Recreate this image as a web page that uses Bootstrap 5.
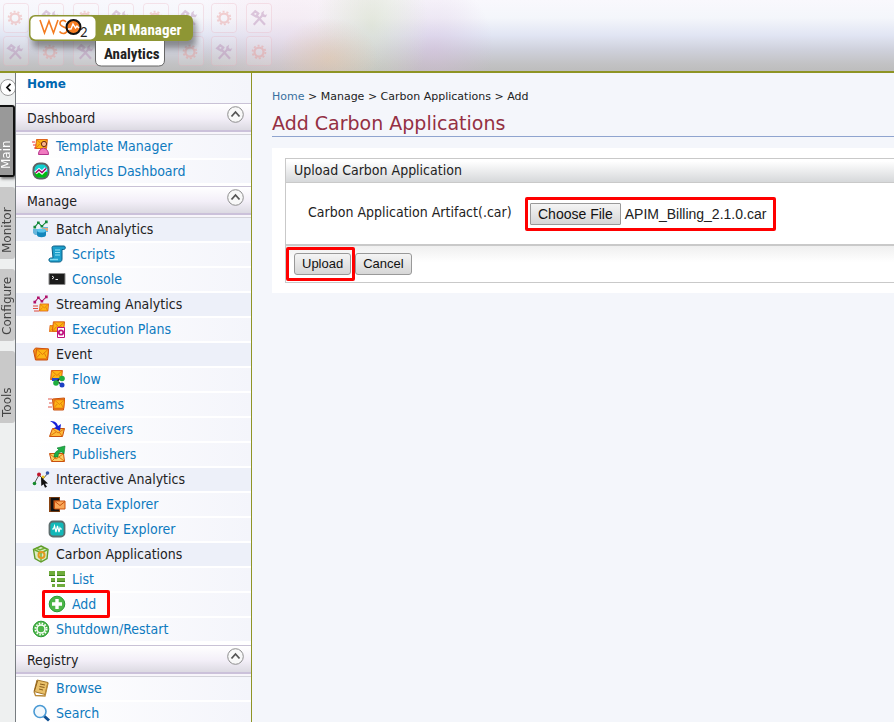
<!DOCTYPE html>
<html lang="en">
<head>
<meta charset="utf-8">
<meta name="viewport" content="width=device-width, initial-scale=1">
<title>WSO2 API Manager Analytics</title>
<link href="https://cdn.jsdelivr.net/npm/bootstrap@5.3.0/dist/css/bootstrap.min.css" rel="stylesheet">
<style>
body{font-family:"DejaVu Sans Condensed","DejaVu Sans",sans-serif;font-size:14px;line-height:16px;color:#222;background:#f4f6fb}
a{color:#0e7abf;text-decoration:none}
.top-bar{height:73px;border-bottom:2px solid #8e9424;background:
 radial-gradient(ellipse 50px 40px at 328px 58px,rgba(232,200,165,.5),transparent),
 radial-gradient(ellipse 56px 90px at 372px 26px,rgba(215,222,200,.6),transparent),
 radial-gradient(ellipse 60px 70px at 434px 50px,rgba(215,185,220,.42),transparent),
 radial-gradient(ellipse 100px 80px at 290px 36px,rgba(245,215,228,.4),transparent),
 linear-gradient(#f9f8fd 0,#f4f6fb 25%,#e1e5f3 50%,#cfd1dc 70%,#c2c2c4 90%,#bdbdbd)}
.brand-art{display:block}
.brand-name{font-family:"Roboto Condensed","Open Sans Condensed","Roboto",sans-serif;font-weight:700}
.rail{width:16px;padding-top:6px;background:#eef0f0;border-right:1px solid #777c80;overflow:hidden;font-family:"DejaVu Sans",sans-serif;font-size:12px}
.rail-toggle{width:16px;height:17px;border:1px solid #999;border-radius:9px;background:#fff;margin-bottom:9px}
.rail-tab{writing-mode:vertical-rl;transform:rotate(180deg);height:72px;width:15px;border:0;border-radius:3px 0 0 3px;background:#c9c9c9;color:#444;line-height:12px;margin-bottom:10px;text-align:left;padding:6px 0 0 2px}
.rail-tab.active{background:#999;color:#fff;border:2px solid #111;border-right:0;box-shadow:-1px -2px 3px #777}
.side{width:236px;border-right:1px solid #8e9424;background:#fff}
.side-home{height:30px;padding-left:11px;font-family:"DejaVu Sans",sans-serif;font-size:12px;font-weight:700;line-height:22px;background:linear-gradient(90deg,#fff,#f4f5fb)}
.side-home a{color:#0067b1}
.side-head{padding:0 7px 0 11px;font-size:14px;font-weight:400;line-height:28px;height:29px;border-top:1px solid #c9c2d6;border-bottom:2px solid #cbc1da;background:linear-gradient(#fff,#f3eff8 55%,#dcdae2)}
.side-rule{height:3px;border-bottom:1px solid #d3d3da;background:#f7f5fa}
.side-list{padding-bottom:1px}
.side-list.long{padding-bottom:2px}
.fold{width:17px;height:17px;margin-top:2px}
.side-row{height:25px;border-bottom:2px solid #fff;padding:0 0 1px 16px;background:linear-gradient(90deg,#fff 14px,#f4f5fb)}
.side-row.sub{padding-left:32px}
.side-row.group{background:#edf0f9}
.side-row svg{width:18px;height:18px;flex:none;margin-right:6px}
.main-col{padding:16px 0 0 20px}
.crumbs{font-family:"DejaVu Sans",sans-serif;font-size:11px}
.crumbs a{color:#386f9e}
h1{margin:6px 0 0;padding-bottom:1px;font-family:"DejaVu Sans",sans-serif;font-size:19px;line-height:24px;color:#943043;border-bottom:1px solid #8fa4cf}
.work{margin-top:11px;padding:10px 0 10px 13px}
.panel-box{border:1px solid #c9c9c9;border-right:0}
.panel-head{font-size:14px;line-height:22px;font-weight:400;height:24px;background:linear-gradient(#fff 10%,#d6d8da);border-bottom:1px solid #c9c9c9}
.panel-body{height:63px;border-bottom:2px solid #c9c9c9;padding-left:22px}
.panel-foot{height:36px;gap:4px;background:linear-gradient(#efefef,#fff 45%)}
.field-name{width:222px;padding-bottom:3px}
.grey-btn{height:22px;padding:0 7px;border:1px solid #999;border-radius:3px;background:linear-gradient(#f4f4f4,#d6d6d6);color:#111;white-space:nowrap}
.grey-btn.square{border-radius:1px}
.ctl{font-family:"Liberation Sans",sans-serif;font-size:13px;line-height:18px}
.ctl.file{font-size:14px}
.hilite{position:relative}
.hilite::after{content:"";position:absolute;border:3px solid #f00;border-radius:2px;pointer-events:none;inset:-6px -4px -6px -8px}
.hilite.file::after{inset:-6px -10px -6px -5px}
.hilite.row-mark::after{inset:-5px -14px -5px -6px}
</style>
</head>
<body class="min-vh-100 d-flex flex-column overflow-hidden">
<svg class="d-none">
<symbol id="cog" viewBox="0 0 24 24"><circle cx="12" cy="12" r="6" fill="none" stroke="currentColor" stroke-width="3"/><circle cx="12" cy="12" r="8.500" fill="none" stroke="currentColor" stroke-width="2.500" stroke-dasharray="2.700 2.600"/></symbol>
<symbol id="tools" viewBox="0 0 24 24"><path d="M5 21 17 8M3 7l4-4 4 3-3 4zM9 9l11 12" fill="none" stroke="currentColor" stroke-width="3"/><path d="M15 5a5 5 0 0 0 6 6l2-4-3 1-2-2 1-4z" fill="currentColor"/></symbol>
<symbol id="fold" viewBox="0 0 17 17"><circle cx="8.500" cy="8.500" r="7.800" fill="#f8f8f8" stroke="#8d8d8d"/><path d="M4.500 10.500 8.500 6l4 4.500" fill="none" stroke="#555" stroke-width="1.800"/></symbol>
<symbol id="mail" viewBox="0 0 14 11"><path d="M1.500.5h12l-1 10H.5z" fill="#fdb515" stroke="#d9540f"/><path d="m2 1 5.500 5L13 1M1 10l4-4.500m7 4.500L9.500 5" fill="none" stroke="#e2780c"/></symbol>
<symbol id="spark" viewBox="0 0 18 10"><path d="m2 8 4-5 4 4 5-5" fill="none" stroke="currentColor" stroke-width="1.200"/><path d="M.5 6.500h3v3h-3zM4.500 1.500h3v3h-3zM8.500 5.500h3v3h-3zM13.500.5h3v3h-3z" fill="currentColor"/></symbol>
</svg>
<header class="top-bar overflow-hidden">
<svg class="brand-art" width="290" height="71" viewBox="0 0 290 71" role="img" aria-label="WSO2 API Manager Analytics">
<defs><filter id="soft" x="-10%" y="-30%" width="120%" height="180%"><feGaussianBlur stdDeviation="3"/></filter></defs>
<g fill="#fff" fill-opacity=".13" stroke="#e9a9b6" stroke-opacity=".28"><rect x="3.500" y="3.500" width="25" height="29" rx="3"/><rect x="38.500" y="3.500" width="25" height="29" rx="3"/><rect x="73.500" y="3.500" width="25" height="29" rx="3"/><rect x="108.500" y="3.500" width="25" height="29" rx="3"/><rect x="143.500" y="3.500" width="25" height="29" rx="3"/><rect x="178.500" y="3.500" width="25" height="29" rx="3"/><rect x="211.500" y="3.500" width="25" height="29" rx="3"/><rect x="246.500" y="3.500" width="25" height="29" rx="3"/><rect x="3.500" y="36.500" width="25" height="29" rx="3"/><rect x="38.500" y="36.500" width="25" height="29" rx="3"/><rect x="73.500" y="36.500" width="25" height="29" rx="3"/><rect x="178.500" y="36.500" width="25" height="29" rx="3"/><rect x="211.500" y="36.500" width="25" height="29" rx="3"/><rect x="246.500" y="36.500" width="25" height="29" rx="3"/></g>
<g color="#e98f8c" opacity=".38"><use href="#cog" x="6" y="9" width="18" height="18"/><use href="#cog" x="76" y="9" width="18" height="18"/><use href="#cog" x="146" y="9" width="18" height="18"/><use href="#cog" x="215" y="9" width="18" height="18"/><use href="#cog" x="41" y="43" width="18" height="18"/><use href="#cog" x="181" y="43" width="18" height="18"/><use href="#cog" x="250" y="43" width="18" height="18"/></g>
<g color="#b07fae" opacity=".38"><use href="#tools" x="41" y="9" width="18" height="18"/><use href="#tools" x="111" y="9" width="18" height="18"/><use href="#tools" x="180" y="9" width="18" height="18"/><use href="#tools" x="250" y="9" width="18" height="18"/><use href="#tools" x="6" y="43" width="18" height="18"/><use href="#tools" x="76" y="43" width="18" height="18"/><use href="#tools" x="215" y="43" width="18" height="18"/></g>
<rect x="32" y="20" width="164" height="28" rx="6" fill="#444" opacity=".55" filter="url(#soft)"/>
<path d="M95.500 38v22q0 6 6 6h57q6 0 6-6V38z" fill="#fff" stroke="#666"/>
<rect x="29" y="15" width="164" height="26" rx="6" fill="#8e9634"/>
<rect x="30.500" y="16.500" width="65" height="23" rx="5" fill="#fff"/>
<path d="m40 20 4.500 13 4.500-12 4.500 12L58 20" fill="none" stroke="#f47b20" stroke-width="1.600"/>
<path d="M66 22c-2-2.500-6-2-6 1.500 0 4 7 3 7 6.500 0 4-5 4.500-7.500 1.500" fill="none" stroke="#f47b20" stroke-width="1.600"/>
<circle cx="73.500" cy="27" r="7" fill="#f47b20" stroke="#111" stroke-width="2"/><path d="M68 29h3l2-5 2.500 4 1.500-2 2 2" fill="none" stroke="#fff" stroke-width="1.400"/>
<text x="80" y="37" font-family="Lato,sans-serif" font-size="13" fill="#222">2</text>
<text class="brand-name" x="104" y="35" font-size="15" fill="#fff">API Manager</text>
<text class="brand-name" x="104" y="59" font-size="15" fill="#222">Analytics</text>
</svg>
</header>
<div class="d-flex flex-grow-1">
<nav class="rail flex-shrink-0" aria-label="Sections">
<button class="rail-toggle p-0 d-flex align-items-center justify-content-center" aria-label="Collapse menu"><svg width="7" height="9" viewBox="0 0 7 9"><path d="M5.500.8 2 4.500l3.500 3.700" fill="none" stroke="#111" stroke-width="1.800"/></svg></button>
<button class="rail-tab active">Main</button><button class="rail-tab">Monitor</button><button class="rail-tab">Configure</button><button class="rail-tab">Tools</button>
</nav>
<nav class="side flex-shrink-0" aria-label="Menu">
<div class="side-home"><a href="#">Home</a></div>

<h2 class="side-head d-flex justify-content-between m-0"><span>Dashboard</span><button class="btn border-0 p-0 lh-1 fold" aria-label="Fold Dashboard"><svg class="d-block" width="17" height="17"><use href="#fold"/></svg></button></h2>
<div class="side-rule"></div>
<ul class="list-unstyled m-0 side-list">
<li class="side-row d-flex align-items-center"><svg viewBox="0 0 18 18"><use href="#mail" x="3" y="2" width="13" height="10"/><path d="M0 5h3M1 8h3M2 11h2" stroke="#e33"/><circle cx="12" cy="7" r="2.600" fill="#f9b48c" stroke="#6a2b12"/><path d="M6.500 17.500c0-4 2-5.500 5-6.500 3 1 5 2.500 5 6.500z" fill="#f07ac0" stroke="#b5338a"/></svg><a href="#">Template Manager</a></li>
<li class="side-row d-flex align-items-center"><svg viewBox="0 0 18 18"><rect x="1.500" y="1.500" width="15" height="15" rx="6" fill="#12cfd0" stroke="#5d6464" stroke-width="2"/><path d="M2.500 10h13c0 4-2 5.500-4 5.500h-5c-2 0-4-1.500-4-5.500z" fill="#0b1"/><path d="m3.500 11 3.500-3 3 2.500 4-4" fill="none" stroke="#fff" stroke-width="3.600"/><path d="m3.500 11 3.500-3 3 2.500 4-4" fill="none" stroke="#a0006a" stroke-width="1.500"/></svg><a href="#">Analytics Dashboard</a></li>
</ul>

<h2 class="side-head d-flex justify-content-between m-0"><span>Manage</span><button class="btn border-0 p-0 lh-1 fold" aria-label="Fold Manage"><svg class="d-block" width="17" height="17"><use href="#fold"/></svg></button></h2>
<div class="side-rule"></div>
<ul class="list-unstyled m-0 side-list long">
<li class="side-row group d-flex align-items-center"><svg viewBox="0 0 18 18"><use href="#spark" color="#12883a" x="1" y="0" width="16" height="9"/><path d="M1 9h6v6H3l-2-2zM11 7h5v5h-5z" fill="#68b6dc"/><path d="M10 8h6v3h-6z" fill="#e6a97a"/><path d="M5 10v5c0 3 9 3 9 0v-5z" fill="#1486bb"/><ellipse cx="9.500" cy="10.500" rx="4.500" ry="2" fill="#5bc5ec"/></svg><span>Batch Analytics</span></li>
<li class="side-row sub d-flex align-items-center"><svg viewBox="0 0 18 18"><path d="M4 2.500C4 1 6 1 7 1h9c2 0 1.500 4-.5 3.500H14V14c0 2-1 3-3 3H3c-2.500 0-3-4 0-4h2z" fill="#1d9fcb" stroke="#0d5f86"/><path d="M7 5h5M7 7.500h5M7 10h5" stroke="#8fe0f5"/><path d="M2 14.500h8" stroke="#7fd8f0" stroke-width="1.500"/></svg><a href="#">Scripts</a></li>
<li class="side-row sub d-flex align-items-center"><svg viewBox="0 0 18 18"><path d="M1 3.500h16v11H1z" fill="#1b1b1b" stroke="#8b8b8b"/><path d="m4 6 2 1.500L4 9m3.500.5H10" fill="none" stroke="#eee"/></svg><a href="#">Console</a></li>
<li class="side-row group d-flex align-items-center"><svg viewBox="0 0 18 18"><use href="#spark" color="#b0126a" x="1" y="0" width="16" height="9"/><path d="M1 11h5M1 13.500h5M2 16h5" stroke="#e0483a"/><use href="#mail" x="7" y="8" width="10" height="9"/></svg><span>Streaming Analytics</span></li>
<li class="side-row sub d-flex align-items-center"><svg viewBox="0 0 18 18"><use href="#mail" x="1" y="5" width="9" height="7"/><use href="#mail" x="4" y="1" width="13" height="11"/><path d="M9.500 7.500h7v10h-7z" fill="#fff" stroke="#c1127f"/><circle cx="13" cy="12.500" r="2.200" fill="none" stroke="#c1127f" stroke-width="1.800"/></svg><a href="#">Execution Plans</a></li>
<li class="side-row group d-flex align-items-center"><svg viewBox="0 0 18 18"><path d="m1.500 5.500 2 9.500h12l1-11-13-1z" fill="#f79a1b" stroke="#c9500e"/><use href="#mail" x="3" y="3" width="14" height="12"/></svg><span>Event</span></li>
<li class="side-row sub d-flex align-items-center"><svg viewBox="0 0 18 18"><use href="#mail" x="2" y="0" width="13" height="10"/><path d="M4 8h7v3H4z" fill="#2546c9"/><path d="m9 11 4-3m-4 3 5 4" stroke="#222" stroke-width="1.500"/><circle cx="14" cy="8.500" r="2.800" fill="#1fae3e"/><circle cx="8" cy="13" r="2.800" fill="#1fae3e"/><circle cx="14" cy="15" r="2.500" fill="#1b3fc4"/></svg><a href="#">Flow</a></li>
<li class="side-row sub d-flex align-items-center"><svg viewBox="0 0 18 18"><path d="M0 4h4M1 8h3M0 12h4" stroke="#e0584a"/><path d="m4.500 4 1 11h10L16.500 3z" fill="#f79a1b" stroke="#c9500e"/><use href="#mail" x="5" y="3" width="12" height="12"/></svg><a href="#">Streams</a></li>
<li class="side-row sub d-flex align-items-center"><svg viewBox="0 0 18 18"><path d="m1.500 16.500 3-8h12l-2 8z" fill="#fdbb3c" stroke="#c9500e"/><path d="m5 9 5 4 6-4M2 16l6-4m6 4-3-4" fill="none" stroke="#e2780c"/><path d="M2 1c4 0 7 1 8 5l3-2-1 7-6-3 2-1C7 4 5 3 2 1z" fill="#1420d8"/></svg><a href="#">Receivers</a></li>
<li class="side-row sub d-flex align-items-center"><svg viewBox="0 0 18 18"><path d="m3.500 16.500-2-8h14l1 8z" fill="#fdcf66" stroke="#c9500e"/><path d="m2 9 6 5 7-5M4 16l4-4m8 4-5-4" fill="none" stroke="#e2780c"/><path d="M6 12c0-4 2-6 5-7L9 3l8-2-1 8-2-2c-3 0-4 2-4 5z" fill="#1fae46" stroke="#0a7a2a" stroke-width=".6"/></svg><a href="#">Publishers</a></li>
<li class="side-row group d-flex align-items-center"><svg viewBox="0 0 18 18"><path d="m2 14 5-9 4 4 5-6" fill="none" stroke="#555"/><circle cx="2.500" cy="13.500" r="1.800" fill="#168a2c"/><circle cx="7" cy="4.500" r="2" fill="#c0162b"/><circle cx="15.500" cy="3" r="1.800" fill="#3557a8"/><circle cx="11" cy="7" r="1.600" fill="#f0c419"/><path d="m9 7 7 6.500-3 .3 2 3-2 1-1.500-3.500L9.300 16z" fill="#111"/></svg><span>Interactive Analytics</span></li>
<li class="side-row sub d-flex align-items-center"><svg viewBox="0 0 18 18"><path d="M1 2h11v15H1z" fill="#8a4513"/><path d="M11 4H4v11h7" fill="none" stroke="#111" stroke-width="2.500"/><path d="M6.500 6h10.500v8H6.500z" fill="#f9a95a" stroke="#c9500e"/><path d="m7 6.500 5 4 5-4" fill="none" stroke="#c9500e"/></svg><a href="#">Data Explorer</a></li>
<li class="side-row sub d-flex align-items-center"><svg viewBox="0 0 18 18"><rect x="1.500" y="1.500" width="15" height="15" rx="3.500" fill="#12b8b8" stroke="#5d6c6c" stroke-width="1.800"/><path d="M4 9h1.500l1-3 1.500 6 1.500-6 1.500 6 1-4 .5 1H14" fill="none" stroke="#fff" stroke-width="1.200"/></svg><a href="#">Activity Explorer</a></li>
<li class="side-row group d-flex align-items-center"><svg viewBox="0 0 18 18"><path d="m9 1 7 3.500-1 9L9 17l-6-3.500-1.500-9z" fill="#dcebc2" stroke="#5f9c2a" stroke-width="1.400"/><path d="M2 4.500 9 8l7-3.500M9 8v8M4 3l4 2 5-2" fill="none" stroke="#6fae34" stroke-width="1.400"/><circle cx="9.500" cy="10" r="3" fill="none" stroke="#e29a1e" stroke-width="2"/></svg><span>Carbon Applications</span></li>
<li class="side-row sub d-flex align-items-center"><svg viewBox="0 0 18 18"><path d="M1 1h6v5H1zM9 1h8v5H9zM3 8h4v4H3zM9 8h8v4H9zM4 14h3v3H4zM9 14h8v3H9z" fill="#6fac3c"/><path d="M1 5.500h6m2 0h8M3 11.500h4m2 0h8" stroke="#3f7f1c"/></svg><a href="#">List</a></li>
<li class="side-row sub d-flex align-items-center"><span class="hilite row-mark d-flex align-items-center"><svg viewBox="0 0 18 18"><circle cx="9" cy="9" r="7.800" fill="#4cb648" stroke="#2b9a35"/><path d="M9 4v10M4 9h10" stroke="#fff" stroke-width="3.400"/></svg><a href="#">Add</a></span></li>
<li class="side-row d-flex align-items-center"><svg viewBox="0 0 18 18"><circle cx="9" cy="9" r="7.800" fill="#4cb648" stroke="#2b9a35"/><circle cx="9" cy="9" r="4" fill="none" stroke="#fff" stroke-width="1.500"/><circle cx="9" cy="9" r="5.600" fill="none" stroke="#fff" stroke-width="1.800" stroke-dasharray="1.500 1.430"/></svg><a href="#">Shutdown/Restart</a></li>
</ul>

<h2 class="side-head d-flex justify-content-between m-0"><span>Registry</span><button class="btn border-0 p-0 lh-1 fold" aria-label="Fold Registry"><svg class="d-block" width="17" height="17"><use href="#fold"/></svg></button></h2>
<div class="side-rule"></div>
<ul class="list-unstyled m-0">
<li class="side-row d-flex align-items-center"><svg viewBox="0 0 18 18"><path d="m5 1 11 2.500-3 12L2 12.500z" fill="#e9c069" stroke="#a5772a"/><path d="m2 12.500 1.500 4L13 17l3-13" fill="none" stroke="#b98a3a" stroke-width="1.300"/><path d="m5.500 2-3 10M8 5l5 1m-5.500 1.500 5 1M7 10l4 1" stroke="#8a5d1c"/></svg><a href="#">Browse</a></li>
<li class="side-row d-flex align-items-center"><svg viewBox="0 0 18 18"><path d="m12 12 5 4.500" stroke="#0d4f93" stroke-width="3"/><circle cx="8" cy="7.500" r="6" fill="#f1f8fd" stroke="#4a9ad4" stroke-width="1.600"/></svg><a href="#">Search</a></li>
</ul>
</nav>
<main class="flex-grow-1 main-col">
<nav class="crumbs" aria-label="Breadcrumb"><a href="#">Home</a> &gt; Manage &gt; Carbon Applications &gt; Add</nav>
<h1>Add Carbon Applications</h1>
<form class="bg-white work">
<section class="panel-box">
<h2 class="panel-head m-0 ps-2">Upload Carbon Application</h2>
<div class="panel-body d-flex align-items-center">
<label class="field-name" for="artifact">Carbon Application Artifact(.car)</label>
<div class="hilite file ctl d-flex align-items-center">
<input class="visually-hidden" type="file" id="artifact" accept=".car" tabindex="-1">
<button type="button" class="grey-btn square" id="choose">Choose File</button><output class="ps-1" id="picked" for="artifact">APIM_Billing_2.1.0.car</output>
</div>
</div>
<div class="panel-foot d-flex align-items-center ps-2 ctl">
<span class="hilite"><button type="button" class="grey-btn">Upload</button></span><button type="button" class="grey-btn">Cancel</button>
</div>
</section>
</form>
</main>
</div>
<script src="https://cdn.jsdelivr.net/npm/bootstrap@5.3.0/dist/js/bootstrap.bundle.min.js"></script>
<script>
const artifact=document.getElementById('artifact');
document.getElementById('choose').addEventListener('click',()=>artifact.click());
artifact.addEventListener('change',()=>{if(artifact.files[0])document.getElementById('picked').textContent=artifact.files[0].name});
</script>
</body>
</html>
